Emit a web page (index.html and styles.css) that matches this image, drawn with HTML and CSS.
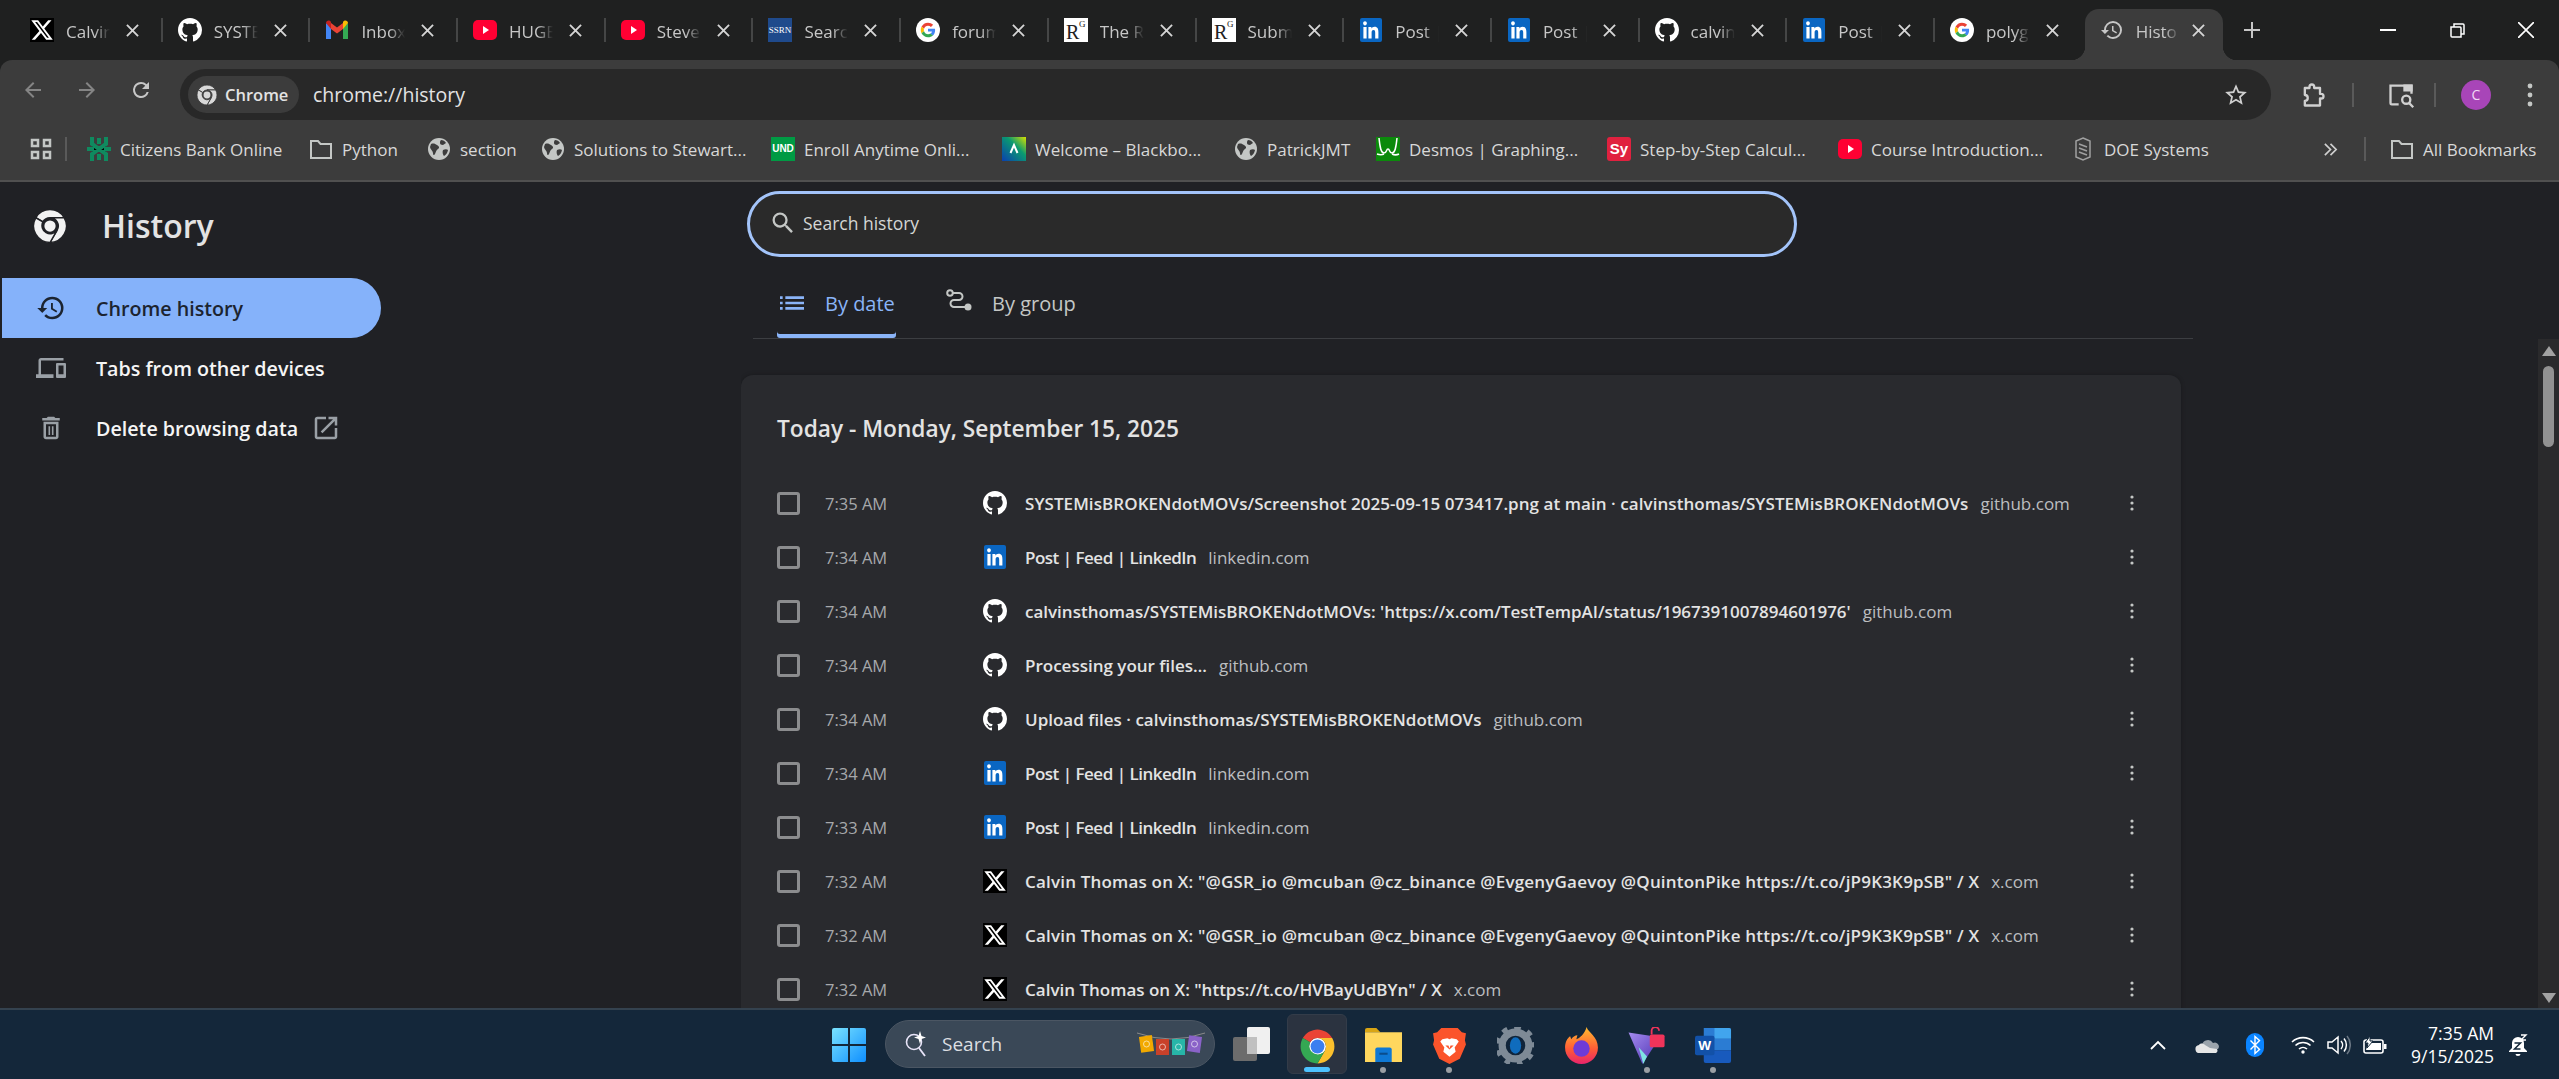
FILE: index.html
```html
<!DOCTYPE html>
<html lang="en">
  <head>
    <meta charset="UTF-8" />
    <title>History</title>
    <link rel="stylesheet" href="styles.css">
  </head>
  <body>
    <!-- icons used more than once -->
    <svg class="sprite" xmlns="http://www.w3.org/2000/svg">
      <symbol id="i-x" viewBox="0 0 24 24">
        <rect width="24" height="24" fill="#000"/>
        <path fill="#fff" d="M18.2 2.2h3.3l-7.2 8.3 8.5 11.2h-6.6l-5.2-6.8-6 6.8H1.7l7.7-8.8L1.3 2.2h6.8l4.7 6.2zm-1.1 17.6h1.8L7.1 4.1h-2z"/>
      </symbol>
      <symbol id="i-gh" viewBox="0 0 16 16">
        <path fill="#fff" d="M8 0C3.58 0 0 3.58 0 8c0 3.54 2.29 6.53 5.47 7.59.4.07.55-.17.55-.38 0-.19-.01-.82-.01-1.49-2.01.37-2.53-.49-2.69-.94-.09-.23-.48-.94-.82-1.13-.28-.15-.68-.52-.01-.53.63-.01 1.08.58 1.23.82.72 1.21 1.87.87 2.33.66.07-.52.28-.87.51-1.07-1.78-.2-3.64-.89-3.64-3.95 0-.87.31-1.59.82-2.15-.08-.2-.36-1.02.08-2.12 0 0 .67-.21 2.2.82.64-.18 1.32-.27 2-.27.68 0 1.36.09 2 .27 1.53-1.04 2.2-.82 2.2-.82.44 1.1.16 1.92.08 2.12.51.56.82 1.27.82 2.15 0 3.07-1.87 3.75-3.65 3.95.29.25.54.73.54 1.48 0 1.07-.01 1.93-.01 2.2 0 .21.15.46.55.38A8.013 8.013 0 0016 8c0-4.42-3.58-8-8-8z"/>
      </symbol>
      <symbol id="i-in" viewBox="0 0 24 24">
        <rect x="1" width="22" height="24" rx="2" fill="#0a66c2"/>
        <path fill="#fff" d="M19.4 20.5h-3.2v-5.6c0-1.3 0-3-1.7-3s-1.9 1.4-1.9 2.9v5.7H9.4V9h3v1.6c.5-.9 1.5-1.9 3.1-1.9 3.3 0 3.9 2.4 3.9 5.5zM6 7.4c-1 0-1.9-.9-1.9-2.1S5 3.3 6 3.3s1.9.9 1.9 2S7 7.4 6 7.4zm1.6 13.1H4.4V9h3.2z"/>
      </symbol>
      <symbol id="i-yt" viewBox="0 0 24 24">
        <rect y="2" width="24" height="20" rx="5" fill="#ff0033"/>
        <path fill="#fff" d="M10 8l6 4-6 4z"/>
      </symbol>
      <symbol id="i-google" viewBox="0 0 48 48">
        <circle cx="24" cy="24" r="24" fill="#fff"/>
        <path fill="#ea4335" d="M24 15.5c2.3 0 4.3.8 5.9 2.3l4.4-4.4C31.6 11 28.1 9.5 24 9.5c-5.7 0-10.6 3.3-13 8l5.1 4c1.2-3.5 4.4-6 7.9-6z"/>
        <path fill="#4285f4" d="M38.2 24.3c0-1-.1-2-.3-2.9H24v5.5h8c-.3 1.8-1.4 3.4-3 4.4l4.9 3.8c2.8-2.6 4.3-6.4 4.3-10.8z"/>
        <path fill="#fbbc05" d="M16.1 26.6c-.3-.9-.5-1.7-.5-2.6s.2-1.8.5-2.6l-5.1-4c-1 2-1.5 4.2-1.5 6.6s.5 4.6 1.5 6.6z"/>
        <path fill="#34a853" d="M24 38.5c3.9 0 7.2-1.3 9.9-3.5L29 31.2c-1.4.9-3 1.5-5 1.5-3.5 0-6.7-2.5-7.9-6.1l-5.1 4c2.4 4.7 7.3 7.9 13 7.9z"/>
      </symbol>
      <symbol id="i-chrome" viewBox="0 0 48 48">
        <circle cx="24" cy="24" r="11" fill="#fff"/>
        <path fill="#ea4335" d="M5 13A22 22 0 0 1 43 13H24A11 11 0 0 0 14.5 18.5z"/>
        <path fill="#fbc02d" d="M43 13A22 22 0 0 1 24 46L33.5 29.5A11 11 0 0 0 24 13z"/>
        <path fill="#34a853" d="M24 46A22 22 0 0 1 5 13L14.5 18.5A11 11 0 0 0 33.5 29.5z"/>
        <circle cx="24" cy="24" r="9" fill="#3b7ff0"/>
      </symbol>
      <symbol id="i-chrome-mono" viewBox="0 0 48 48">
        <g fill="currentColor" stroke="var(--gap)" stroke-width="2">
          <path d="M5 13A22 22 0 0 1 43 13H24A11 11 0 0 0 14.5 18.5z"/>
          <path d="M43 13A22 22 0 0 1 24 46L33.5 29.5A11 11 0 0 0 24 13z"/>
          <path d="M24 46A22 22 0 0 1 5 13L14.5 18.5A11 11 0 0 0 33.5 29.5z"/>
        </g>
        <circle cx="24" cy="24" r="7.5" fill="currentColor"/>
      </symbol>
      <symbol id="i-globe" viewBox="0 0 24 24">
        <circle cx="12" cy="12" r="11" fill="#c4c7c5"/>
        <path fill="#3c3c3c" d="M4 7c3-1 4 0 6 1s3 3 1 4-2 3-3 5-2 1-2-1-3-4-3-6zM14 3c2 0 4 1 5 3l-3 2c-2 0-3-1-3-2s0-2 1-3zM16 13c2-1 4-1 5 0-.5 3-2 5-4 6-1-1-2-4-1-6z"/>
      </symbol>
      <symbol id="i-folder" viewBox="0 0 24 24">
        <path fill="none" stroke="#c4c7c5" stroke-width="2" d="M2 4h7l2.5 3H22v14H2z"/>
      </symbol>
      <symbol id="i-history" viewBox="0 0 24 24">
        <path fill="currentColor" d="M13 3a9 9 0 0 0-9 9H1l3.89 3.89.07.14L9 12H6c0-3.87 3.13-7 7-7s7 3.13 7 7-3.13 7-7 7c-1.93 0-3.68-.79-4.94-2.06l-1.42 1.42A8.954 8.954 0 0 0 13 21a9 9 0 0 0 0-18zm-1 5v5l4.28 2.54.72-1.21-3.5-2.08V8H12z"/>
      </symbol>
      <symbol id="i-close" viewBox="0 0 14 14">
        <path fill="none" stroke="currentColor" stroke-width="2" d="M1 1l12 12M13 1L1 13"/>
      </symbol>
      <symbol id="i-dots" viewBox="0 0 4 16">
        <circle cx="2" cy="2" r="1.6" fill="#c4c7c5"/>
        <circle cx="2" cy="8" r="1.6" fill="#c4c7c5"/>
        <circle cx="2" cy="14" r="1.6" fill="#c4c7c5"/>
      </symbol>
    </svg>

    <div class="tabstrip">
      <div class="tab"><svg class="fav"><use href="#i-x"/></svg><span class="tab-title">Calvin</span><svg class="tab-close"><use href="#i-close"/></svg></div>
      <div class="tab"><svg class="fav"><use href="#i-gh"/></svg><span class="tab-title">SYSTE</span><svg class="tab-close"><use href="#i-close"/></svg></div>
      <div class="tab">
        <svg class="fav" viewBox="0 0 24 24"><path fill="#4285f4" d="M1 21V5l5 3.5V21z"/><path fill="#34a853" d="M23 21V5l-5 3.5V21z"/><path fill="#ea4335" d="M6 11V5l6 4.5L18 5v6l-6 4.5z"/><path fill="#c5221f" d="M1 5c0-2 2.5-3 4-2l1 .8V11z"/><path fill="#fbbc05" d="M23 5c0-2-2.5-3-4-2l-1 .8V11z"/></svg>
        <span class="tab-title">Inbox</span><svg class="tab-close"><use href="#i-close"/></svg>
      </div>
      <div class="tab"><svg class="fav"><use href="#i-yt"/></svg><span class="tab-title">HUGE</span><svg class="tab-close"><use href="#i-close"/></svg></div>
      <div class="tab"><svg class="fav"><use href="#i-yt"/></svg><span class="tab-title">Steve</span><svg class="tab-close"><use href="#i-close"/></svg></div>
      <div class="tab">
        <svg class="fav" viewBox="0 0 24 24"><rect width="24" height="24" fill="#1f4a8c"/><text class="ssrn-mark" x="12" y="15">SSRN</text></svg>
        <span class="tab-title">Searc</span><svg class="tab-close"><use href="#i-close"/></svg>
      </div>
      <div class="tab"><svg class="fav"><use href="#i-google"/></svg><span class="tab-title">forum</span><svg class="tab-close"><use href="#i-close"/></svg></div>
      <div class="tab">
        <svg class="fav" viewBox="0 0 24 24"><rect width="24" height="24" fill="#fff"/><text class="rg-big" x="2" y="21">R</text><text class="rg-small" x="15" y="9">G</text></svg>
        <span class="tab-title">The R</span><svg class="tab-close"><use href="#i-close"/></svg>
      </div>
      <div class="tab">
        <svg class="fav" viewBox="0 0 24 24"><rect width="24" height="24" fill="#fff"/><text class="rg-big" x="2" y="21">R</text><text class="rg-small" x="15" y="9">G</text></svg>
        <span class="tab-title">Subm</span><svg class="tab-close"><use href="#i-close"/></svg>
      </div>
      <div class="tab"><svg class="fav"><use href="#i-in"/></svg><span class="tab-title">Post |</span><svg class="tab-close"><use href="#i-close"/></svg></div>
      <div class="tab"><svg class="fav"><use href="#i-in"/></svg><span class="tab-title">Post |</span><svg class="tab-close"><use href="#i-close"/></svg></div>
      <div class="tab"><svg class="fav"><use href="#i-gh"/></svg><span class="tab-title">calvin</span><svg class="tab-close"><use href="#i-close"/></svg></div>
      <div class="tab"><svg class="fav"><use href="#i-in"/></svg><span class="tab-title">Post |</span><svg class="tab-close"><use href="#i-close"/></svg></div>
      <div class="tab"><svg class="fav"><use href="#i-google"/></svg><span class="tab-title">polyg</span><svg class="tab-close"><use href="#i-close"/></svg></div>
      <div class="tab tab-active"><svg class="fav"><use href="#i-history"/></svg><span class="tab-title">Histo</span><svg class="tab-close"><use href="#i-close"/></svg></div>

      <svg class="new-tab" viewBox="0 0 16 16"><path fill="none" stroke="#c7c7c7" stroke-width="2" d="M8 0v16M0 8h16"/></svg>

      <div class="window-controls">
        <svg class="win-btn" viewBox="0 0 16 16"><path stroke="#fff" stroke-width="2" d="M0 8h16"/></svg>
        <svg class="win-btn" viewBox="0 0 16 16"><path fill="none" stroke="#fff" stroke-width="1.5" d="M2 5h9a1 1 0 0 1 1 1v9H3a1 1 0 0 1-1-1zM5 5V2h9a1 1 0 0 1 1 1v9h-3"/></svg>
        <svg class="win-btn" viewBox="0 0 16 16"><path stroke="#fff" stroke-width="1.7" d="M0 0l16 16M16 0L0 16"/></svg>
      </div>
    </div>

    <div class="toolbar">
      <svg class="tool-icon first" viewBox="0 0 24 24"><path fill="#858585" d="M20 11H7.8l5.6-5.6L12 4l-8 8 8 8 1.4-1.4L7.8 13H20z"/></svg>
      <svg class="tool-icon" viewBox="0 0 24 24"><path fill="#858585" d="M4 11h12.2l-5.6-5.6L12 4l8 8-8 8-1.4-1.4 5.6-5.6H4z"/></svg>
      <svg class="tool-icon" viewBox="0 0 24 24"><path fill="#c7c7c7" d="M17.65 6.35A7.96 7.96 0 0 0 12 4a8 8 0 1 0 7.73 10h-2.08A6 6 0 1 1 12 6c1.66 0 3.14.69 4.22 1.78L13 11h7V4z"/></svg>
      <div class="omnibox">
        <div class="chip">
          <svg class="chip-icon"><use href="#i-chrome-mono"/></svg>
          <span>Chrome</span>
        </div>
        <span class="url">chrome://history</span>
        <svg class="star" viewBox="0 0 24 24"><path fill="#d0d0d0" d="M22 9.24l-7.19-.62L12 2 9.19 8.63 2 9.24l5.46 4.73L5.82 21 12 17.27 18.18 21l-1.63-7.03L22 9.24zM12 15.4l-3.76 2.27 1-4.28-3.32-2.88 4.38-.38L12 6.1l1.71 4.04 4.38.38-3.32 2.88 1 4.28L12 15.4z"/></svg>
      </div>
      <svg class="tool-btn ext" viewBox="0 0 24 24"><path fill="none" stroke="#d0d0d0" stroke-width="2" stroke-linejoin="round" d="M5 6h4V5a2 2 0 0 1 4 0v1h5v5h1a2 2 0 0 1 0 4h-1v6H5v-4a2.5 2.5 0 0 0 0-5z"/></svg>
      <span class="tool-sep"></span>
      <svg class="tool-btn panel" viewBox="0 0 24 24"><path fill="none" stroke="#d0d0d0" stroke-width="2" d="M10 20H4a1 1 0 0 1-1-1V4h18v7"/><path fill="#d0d0d0" d="M14 3h8v6h-8z"/><circle cx="16.5" cy="16" r="3.5" fill="none" stroke="#d0d0d0" stroke-width="2"/><path stroke="#d0d0d0" stroke-width="2" d="M19 19l3.5 3.5"/></svg>
      <span class="tool-sep"></span>
      <span class="avatar">C</span>
      <svg class="tool-menu"><use href="#i-dots"/></svg>
    </div>

    <div class="bookmarks">
      <svg class="bm-apps" viewBox="0 0 22 22"><path fill="none" stroke="#c4c7c5" stroke-width="2.5" d="M2 2h6v6H2zM14 2h6v6h-6zM2 14h6v6H2zM14 14h6v6h-6z"/></svg>
      <span class="bm-sep"></span>
      <div class="bm">
        <svg class="fav" viewBox="0 0 24 24"><g stroke="#0f8a5f" stroke-width="4"><path d="M5 0v7l7 5-7 5v7M19 0v7l-7 5 7 5v7M0 12h7M17 12h7M12 1v6M12 17v6"/></g></svg>
        <span>Citizens Bank Online</span>
      </div>
      <div class="bm"><svg class="fav"><use href="#i-folder"/></svg><span>Python</span></div>
      <div class="bm"><svg class="fav"><use href="#i-globe"/></svg><span>section</span></div>
      <div class="bm"><svg class="fav"><use href="#i-globe"/></svg><span>Solutions to Stewart...</span></div>
      <div class="bm">
        <svg class="fav" viewBox="0 0 24 24"><rect width="24" height="24" fill="#009a44"/><text class="und-mark" x="12" y="15">UND</text></svg>
        <span>Enroll Anytime Onli...</span>
      </div>
      <div class="bm">
        <svg class="fav" viewBox="0 0 24 24"><defs><linearGradient id="bb-grad" x1="0" y1="1" x2="1" y2="0"><stop offset="0" stop-color="#0a3fb0"/><stop offset=".6" stop-color="#0a9a70"/><stop offset="1" stop-color="#d8e000"/></linearGradient></defs><rect width="24" height="24" fill="url(#bb-grad)"/><path fill="none" stroke="#fff" stroke-width="2" d="M8.5 16L12 8l3.5 8"/></svg>
        <span>Welcome – Blackbo...</span>
      </div>
      <div class="bm"><svg class="fav"><use href="#i-globe"/></svg><span>PatrickJMT</span></div>
      <div class="bm">
        <svg class="fav" viewBox="0 0 24 24"><rect width="24" height="24" fill="#0b8a0b"/><path fill="none" stroke="#fff" stroke-width="1.5" d="M3 1c1 10 2 15 5 15s2-4 4-4 1 4 4 4 4-5 5-15M1 17c3 1 5 1 7 0M16 17c2 1 5 1 7 0"/></svg>
        <span>Desmos | Graphing...</span>
      </div>
      <div class="bm">
        <svg class="fav" viewBox="0 0 24 24"><rect width="24" height="24" rx="3" fill="#e0213f"/><text class="sy-mark" x="12" y="17">Sy</text></svg>
        <span>Step-by-Step Calcul...</span>
      </div>
      <div class="bm"><svg class="fav"><use href="#i-yt"/></svg><span>Course Introduction...</span></div>
      <div class="bm">
        <svg class="fav" viewBox="0 0 24 24"><path fill="none" stroke="#a0a0a0" stroke-width="1.5" d="M12 1l7 3v16l-7 3-7-3V4z"/><path stroke="#a0a0a0" stroke-width="1.5" d="M8 7l8 3M8 11l8 3M8 15l8 3"/></svg>
        <span>DOE Systems</span>
      </div>
      <svg class="bm-more" viewBox="0 0 16 16"><path fill="none" stroke="#d0d0d0" stroke-width="1.8" d="M2 2l6 6-6 6M8 2l6 6-6 6"/></svg>
      <span class="bm-sep"></span>
      <div class="bm"><svg class="fav"><use href="#i-folder"/></svg><span>All Bookmarks</span></div>
    </div>

    <main class="main">
      <aside class="sidebar">
        <div class="side-head">
          <svg class="side-logo"><use href="#i-chrome-mono"/></svg>
          <span>History</span>
        </div>
        <nav>
          <a class="nav-item nav-active">
            <svg class="nav-icon"><use href="#i-history"/></svg>
            <span>Chrome history</span>
          </a>
          <a class="nav-item">
            <svg class="nav-icon" viewBox="0 0 24 24"><path fill="#9aa0a6" d="M4 6h18V4H4c-1.1 0-2 .9-2 2v11H0v3h14v-3H4V6zm19 2h-6c-.55 0-1 .45-1 1v10c0 .55.45 1 1 1h6c.55 0 1-.45 1-1V9c0-.55-.45-1-1-1zm-1 9h-4v-7h4v7z"/></svg>
            <span>Tabs from other devices</span>
          </a>
          <a class="nav-item">
            <svg class="nav-icon" viewBox="0 0 24 24"><path fill="#9aa0a6" d="M6 19c0 1.1.9 2 2 2h8c1.1 0 2-.9 2-2V7H6v12zM8 9h8v10H8V9zm7.5-5l-1-1h-5l-1 1H5v2h14V4h-3.5zM10 10.5h1.3v7H10zM12.7 10.5H14v7h-1.3z"/></svg>
            <span>Delete browsing data</span>
            <svg class="nav-ext" viewBox="0 0 24 24"><path fill="#9aa0a6" d="M19 19H5V5h7V3H5c-1.11 0-2 .9-2 2v14c0 1.1.89 2 2 2h14c1.1 0 2-.9 2-2v-7h-2v7zM14 3v2h3.59l-9.83 9.83 1.41 1.41L19 6.41V10h2V3h-7z"/></svg>
          </a>
        </nav>
      </aside>

      <section class="content">
        <div class="search">
          <svg class="search-icon" viewBox="0 0 24 24"><path fill="#c4c7c5" d="M15.5 14h-.79l-.28-.27A6.471 6.471 0 0 0 16 9.5 6.5 6.5 0 1 0 9.5 16c1.61 0 3.09-.59 4.23-1.57l.27.28v.79l5 4.99L20.49 19l-4.99-5zm-6 0C7.01 14 5 11.99 5 9.5S7.01 5 9.5 5 14 7.01 14 9.5 11.99 14 9.5 14z"/></svg>
          <span>Search history</span>
        </div>

        <div class="view-tabs">
          <div class="view-tab view-tab-on">
            <svg class="view-icon" viewBox="3 7 18 10"><path fill="#8ab4f8" d="M3 13h2v-2H3v2zm0 4h2v-2H3v2zm0-8h2V7H3v2zm4 4h14v-2H7v2zm0 4h14v-2H7v2zM7 7v2h14V7H7z"/></svg>
            <span>By date</span>
          </div>
          <div class="view-tab">
            <svg class="group-icon" viewBox="0 0 26 22"><circle cx="4" cy="4" r="2.8" fill="none" stroke="#c4c7c5" stroke-width="2"/><circle cx="22" cy="18" r="3.5" fill="#c4c7c5"/><path fill="none" stroke="#c4c7c5" stroke-width="2" d="M7 4h6a3.5 3.5 0 0 1 0 7H8a3.5 3.5 0 0 0 0 7h11"/></svg>
            <span>By group</span>
          </div>
        </div>

        <div class="card">
          <h2 class="card-title">Today - Monday, September 15, 2025</h2>

          <div class="row"><span class="check"></span><span class="time">7:35 AM</span><svg class="fav"><use href="#i-gh"/></svg><span class="title title-long">SYSTEMisBROKENdotMOVs/Screenshot 2025-09-15 073417.png at main · calvinsthomas/SYSTEMisBROKENdotMOVs</span><span class="domain">github.com</span><svg class="row-menu"><use href="#i-dots"/></svg></div>
          <div class="row"><span class="check"></span><span class="time">7:34 AM</span><svg class="fav"><use href="#i-in"/></svg><span class="title title-tight">Post | Feed | LinkedIn</span><span class="domain">linkedin.com</span><svg class="row-menu"><use href="#i-dots"/></svg></div>
          <div class="row"><span class="check"></span><span class="time">7:34 AM</span><svg class="fav"><use href="#i-gh"/></svg><span class="title">calvinsthomas/SYSTEMisBROKENdotMOVs: 'https://x.com/TestTempAI/status/1967391007894601976'</span><span class="domain">github.com</span><svg class="row-menu"><use href="#i-dots"/></svg></div>
          <div class="row"><span class="check"></span><span class="time">7:34 AM</span><svg class="fav"><use href="#i-gh"/></svg><span class="title">Processing your files…</span><span class="domain">github.com</span><svg class="row-menu"><use href="#i-dots"/></svg></div>
          <div class="row"><span class="check"></span><span class="time">7:34 AM</span><svg class="fav"><use href="#i-gh"/></svg><span class="title">Upload files · calvinsthomas/SYSTEMisBROKENdotMOVs</span><span class="domain">github.com</span><svg class="row-menu"><use href="#i-dots"/></svg></div>
          <div class="row"><span class="check"></span><span class="time">7:34 AM</span><svg class="fav"><use href="#i-in"/></svg><span class="title title-tight">Post | Feed | LinkedIn</span><span class="domain">linkedin.com</span><svg class="row-menu"><use href="#i-dots"/></svg></div>
          <div class="row"><span class="check"></span><span class="time">7:33 AM</span><svg class="fav"><use href="#i-in"/></svg><span class="title title-tight">Post | Feed | LinkedIn</span><span class="domain">linkedin.com</span><svg class="row-menu"><use href="#i-dots"/></svg></div>
          <div class="row"><span class="check"></span><span class="time">7:32 AM</span><svg class="fav"><use href="#i-x"/></svg><span class="title title-wide">Calvin Thomas on X: "@GSR_io @mcuban @cz_binance @EvgenyGaevoy @QuintonPike https://t.co/jP9K3K9pSB" / X</span><span class="domain">x.com</span><svg class="row-menu"><use href="#i-dots"/></svg></div>
          <div class="row"><span class="check"></span><span class="time">7:32 AM</span><svg class="fav"><use href="#i-x"/></svg><span class="title title-wide">Calvin Thomas on X: "@GSR_io @mcuban @cz_binance @EvgenyGaevoy @QuintonPike https://t.co/jP9K3K9pSB" / X</span><span class="domain">x.com</span><svg class="row-menu"><use href="#i-dots"/></svg></div>
          <div class="row"><span class="check"></span><span class="time">7:32 AM</span><svg class="fav"><use href="#i-x"/></svg><span class="title">Calvin Thomas on X: "https://t.co/HVBayUdBYn" / X</span><span class="domain">x.com</span><svg class="row-menu"><use href="#i-dots"/></svg></div>
        </div>
      </section>

      <div class="scrollbar">
        <span class="arrow-up"></span>
        <span class="thumb"></span>
        <span class="arrow-down"></span>
      </div>
    </main>

    <footer class="taskbar">
      <svg class="win-logo" viewBox="0 0 36 36"><defs><linearGradient id="win-grad" x1="0" y1="0" x2="1" y2="1"><stop offset="0" stop-color="#7ae3ff"/><stop offset="1" stop-color="#0f8fff"/></linearGradient></defs><path fill="url(#win-grad)" d="M1 3a2 2 0 0 1 2-2h14v16H1zM19 1h14a2 2 0 0 1 2 2v14H19zM1 19h16v16H3a2 2 0 0 1-2-2zM19 19h16v14a2 2 0 0 1-2 2H19z"/></svg>

      <div class="task-search">
        <svg class="task-search-icon" viewBox="0 0 24 26"><circle cx="10" cy="11" r="7.5" fill="none" stroke="#e8e4f8" stroke-width="1.6"/><path stroke="#e8e4f8" stroke-width="1.8" d="M15 17l6 8"/><path fill="#fff" d="M16 0l1.5 5L22 6.5 17.5 8 16 13l-1.5-5L10 6.5 14.5 5z"/></svg>
        <span>Search</span>
        <svg class="flags" viewBox="0 0 70 24">
          <path fill="none" stroke="#8a8a8a" d="M1 1q34 12 68 0"/>
          <rect x="4" y="4" width="13" height="16" fill="#f2a900" transform="rotate(-8 10 12)"/>
          <rect x="20" y="7" width="13" height="16" fill="#c8412a"/>
          <rect x="36" y="7" width="13" height="16" fill="#27b5a8"/>
          <rect x="52" y="4" width="13" height="16" fill="#8a63c8" transform="rotate(8 58 12)"/>
          <g fill="none" stroke="#fff" stroke-opacity=".6"><circle cx="10.5" cy="12" r="3"/><circle cx="26.5" cy="15" r="3"/><circle cx="42.5" cy="15" r="3"/><circle cx="58.5" cy="12" r="3"/></g>
        </svg>
      </div>

      <svg class="task-view" viewBox="0 0 37 34"><rect x="14" width="23" height="27" rx="2" fill="#f0f0f0"/><rect y="10" width="24" height="24" rx="2" fill="#6c6c6c"/><rect x="14" y="10" width="10" height="17" fill="#c0c0c0"/></svg>

      <div class="app app-on">
        <svg class="app-icon"><use href="#i-chrome"/></svg>
        <span class="app-line"></span>
      </div>
      <div class="app">
        <svg class="app-icon" viewBox="0 0 36 36"><path fill="#d9a514" d="M0 3a2 2 0 0 1 2-2h9l4 4H0z"/><path fill="#ffd75e" d="M0 5h36v29H0z"/><path fill="#0f78d4" d="M10 22a2 2 0 0 1 2-2h12a2 2 0 0 1 2 2v12H10z"/><path fill="#0a4d8c" d="M14 25h8v2h-8z"/></svg>
        <span class="app-dot"></span>
      </div>
      <div class="app">
        <svg class="app-icon" viewBox="0 0 36 36"><path fill="#fb542b" d="M10 1h16l4 4 4 1-1 7 1 4-6 14-10 5-10-5-6-14 1-4-1-7 4-1z"/><path fill="#fff" d="M11 12l5-1 2 1 2-1 5 1 2 2-4 6 1 4-6 5-6-5 1-4-4-6z"/><path fill="#fb542b" d="M14 18h3l1 3 1-3h3l-4 4z"/></svg>
        <span class="app-dot"></span>
      </div>
      <div class="app">
        <svg class="app-icon" viewBox="0 0 36 36"><circle cx="18" cy="18" r="13" fill="none" stroke="#7e8a96" stroke-width="7"/><path stroke="#7e8a96" stroke-width="7" stroke-dasharray="5 6.3" fill="none" d="M18 1.5a16.5 16.5 0 1 1 0 33 16.5 16.5 0 1 1 0-33"/><circle cx="18" cy="18" r="9" fill="#10243a"/><ellipse cx="18" cy="18" rx="5.5" ry="8" fill="#0f6cbd"/></svg>
      </div>
      <div class="app">
        <svg class="app-icon" viewBox="0 0 36 36"><defs><linearGradient id="ff-grad" x1="0" y1="0" x2="0" y2="1"><stop offset="0" stop-color="#ffbd2e"/><stop offset=".6" stop-color="#ff5a36"/><stop offset="1" stop-color="#e8246c"/></linearGradient></defs><path fill="url(#ff-grad)" d="M23 0c1 5 11 9 11 20a16 16 0 0 1-32 0c0-5 2-9 5-11l1 3c1-2 4-4 6-4l-1 4c3-1 8-5 10-12z"/><circle cx="18" cy="21" r="8" fill="#6e3bd6"/></svg>
      </div>
      <div class="app">
        <svg class="app-icon proton" viewBox="0 0 42 40"><defs><linearGradient id="vpn-grad" x1="0" y1="0" x2="1" y2="1"><stop offset="0" stop-color="#a68cf0"/><stop offset="1" stop-color="#4a2fb0"/></linearGradient></defs><path fill="url(#vpn-grad)" d="M1 6l34 5-19 29z"/><path fill="#7fe3e3" d="M12 22l5 18 4-8z"/><path fill="none" stroke="#f0345a" stroke-width="2" d="M26 8V4a4 4 0 0 1 8 0"/><rect x="24" y="8" width="16" height="14" rx="2" fill="#f0345a"/></svg>
        <span class="app-dot"></span>
      </div>
      <div class="app">
        <svg class="app-icon" viewBox="0 0 38 36"><path fill="#2b7cd3" d="M9 0h26a2 2 0 0 1 2 2v9H9z"/><path fill="#41a5ee" d="M20 0h15a2 2 0 0 1 2 2v9H20z"/><path fill="#2b7cd3" d="M9 11h28v12H9z"/><path fill="#185abd" d="M9 23h28v11a2 2 0 0 1-2 2H11a2 2 0 0 1-2-2z"/><rect y="8" width="20" height="20" rx="2" fill="#1251a8"/><text class="word-mark" x="10" y="23">W</text></svg>
        <span class="app-dot"></span>
      </div>

      <div class="tray">
        <svg class="tray-chevron" viewBox="0 0 16 10"><path fill="none" stroke="#fff" stroke-width="1.8" d="M1 9l7-7 7 7"/></svg>
        <svg class="tray-cloud" viewBox="0 0 24 16"><path fill="#9aa3ab" d="M7 8a6 6 0 0 1 11-2 4 4 0 0 1 5 6H8z"/><path fill="#e6e6e6" d="M5 16a4 4 0 0 1-1-8c1-2 4-2 6 0l5 3 7 1a3 3 0 0 1-1 4z"/></svg>
        <svg class="tray-bt" viewBox="0 0 18 24"><rect width="18" height="24" rx="9" fill="#0a84ff"/><path fill="none" stroke="#fff" stroke-width="1.4" d="M4.5 7.5l9 9L9 20.5v-17l4.5 4-9 9"/></svg>
        <svg class="tray-wifi" viewBox="0 0 24 18"><g fill="none" stroke="#fff" stroke-width="1.6"><path d="M1 6a16 16 0 0 1 22 0"/><path d="M4.5 9.5a11 11 0 0 1 15 0"/><path d="M8 13a6 6 0 0 1 8 0"/></g><circle cx="12" cy="16" r="1.7" fill="#fff"/></svg>
        <svg class="tray-sound" viewBox="0 0 24 20"><path fill="none" stroke="#fff" stroke-width="1.5" d="M1 7h4l6-5v16l-6-5H1zM14 6a6 6 0 0 1 0 8M17 3.5a10 10 0 0 1 0 13"/><path fill="none" stroke="#6a7683" stroke-width="1.5" d="M20 1a14 14 0 0 1 0 18"/></svg>
        <svg class="tray-battery" viewBox="0 0 24 18"><rect x="1" y="4" width="19" height="13" rx="2" fill="none" stroke="#fff" stroke-width="1.6"/><path fill="#fff" d="M21 8h2.5v5H21zM5 7h13v7H3z"/><path fill="#fff" stroke="#13273a" d="M7 0L2 7h3l-1 5 6-7H7z"/></svg>
        <div class="clock">
          <span>7:35 AM</span>
          <span>9/15/2025</span>
        </div>
        <svg class="tray-bell" viewBox="0 0 20 22"><path fill="#fff" d="M10 3a6 6 0 0 0-6 6v5l-3 3v1h18v-1l-3-3V9a6 6 0 0 0-6-6zM7.5 20h5a2.5 2 0 0 1-5 0z"/><path fill="none" stroke="#13273a" stroke-width="1.5" d="M6.5 9h6l-6 6h6"/><path fill="none" stroke="#fff" stroke-width="1.4" d="M13 1h5l-5 5h5"/></svg>
      </div>
    </footer>
  </body>
</html>
```

FILE: styles.css
```css
:root {
  --page-bg: #202125;
  --card-bg: #292a2e;
  --toolbar-bg: #3c3c3c;
  --strip-bg: #1f2020;
  --blue: #8ab4f8;
  --text: #e3e3e3;
  --muted: #c4c7c5;
  --ui-font: "Open Sans", "Noto Sans", sans-serif;
}

* {
  box-sizing: border-box;
}

html,
body {
  margin: 0;
  height: 100%;
  overflow: hidden;
}

body {
  display: flex;
  flex-direction: column;
  height: 1079px;
  background-color: var(--strip-bg);
  font-family: var(--ui-font);
  color: var(--text);
}

.sprite {
  position: absolute;
  width: 0;
  height: 0;
}

.fav {
  flex: none;
  width: 24px;
  height: 24px;
}

/* tab strip */
.tabstrip {
  display: flex;
  align-items: flex-end;
  flex: none;
  height: 60px;
  padding-left: 15px;
}

.tab {
  display: flex;
  align-items: center;
  flex: none;
  position: relative;
  width: 147.7px;
  height: 51px;
  padding: 0 0 9px 15px;
}

.tab::after {
  content: "";
  position: absolute;
  right: 0;
  top: 9px;
  width: 2px;
  height: 24px;
  background-color: #454646;
}

.tab:has(+ .tab-active)::after {
  display: none;
}

.tab-title {
  width: 44px;
  margin-left: 12px;
  padding-top: 3px;
  overflow: hidden;
  white-space: nowrap;
  font-size: 17px;
  color: #c7c7c7;
  -webkit-mask-image: linear-gradient(to right, #000 65%, transparent);
  mask-image: linear-gradient(to right, #000 65%, transparent);
}

.tab-close {
  flex: none;
  width: 13px;
  height: 13px;
  margin-left: 16px;
  color: #d5d5d5;
}

.tab-active {
  width: 138px;
  margin-left: 2px;
  border-radius: 14px 14px 0 0;
  background-color: var(--toolbar-bg);
}

/* the flared feet of the open tab */
.tab-active::before,
.tab-active::after {
  content: "";
  position: absolute;
  top: auto;
  bottom: 0;
  width: 14px;
  height: 14px;
}

.tab-active::before {
  left: -14px;
  background: radial-gradient(circle at 0 0, transparent 14px, var(--toolbar-bg) 14.5px);
}

.tab-active::after {
  right: -14px;
  background: radial-gradient(circle at 100% 0, transparent 14px, var(--toolbar-bg) 14.5px);
}

.tab-active .fav {
  color: #c7c7c7;
}

.tab-active .tab-close {
  margin-left: 12px;
}

.new-tab {
  flex: none;
  width: 16px;
  height: 16px;
  margin: 0 0 22px 21px;
}

.window-controls {
  display: flex;
  align-items: center;
  gap: 53px;
  height: 60px;
  margin-left: auto;
  padding-right: 25px;
  align-self: flex-start;
}

.win-btn {
  width: 16px;
  height: 16px;
}

/* toolbar */
.toolbar {
  display: flex;
  align-items: center;
  flex: none;
  height: 60px;
  border-radius: 12px 12px 0 0;
  background-color: var(--toolbar-bg);
}

.tool-icon {
  flex: none;
  width: 24px;
  height: 24px;
  margin-left: 30px;
}

.tool-icon.first {
  margin-left: 21px;
}

.omnibox {
  display: flex;
  align-items: center;
  flex: none;
  width: 2091px;
  height: 51px;
  margin: 9px 0 0 27px;
  padding: 0 22px 0 8px;
  border-radius: 26px;
  background-color: #282828;
}

.chip {
  display: flex;
  align-items: center;
  gap: 7px;
  width: 111px;
  height: 37px;
  padding-left: 8px;
  border-radius: 19px;
  background-color: #3c3c3c;
  font-size: 16.5px;
  font-weight: 600;
  color: #e3e3e3;
  --gap: #3c3c3c;
}

.chip-icon {
  flex: none;
  width: 22px;
  height: 22px;
  color: #d8d8d8;
}

.url {
  margin-left: 14px;
  font-size: 19.5px;
  color: #e3e3e3;
}

.star {
  width: 26px;
  height: 26px;
  margin-left: auto;
}

.tool-btn {
  flex: none;
  width: 28px;
  height: 28px;
  margin-top: 9px;
}

.ext {
  margin-left: 28px;
}

.tool-sep {
  flex: none;
  width: 2px;
  height: 24px;
  margin: 9px 33px 0 25px;
  background-color: #5a5a5a;
}

.panel + .tool-sep {
  margin: 9px 25px 0 19px;
}

.avatar {
  display: flex;
  align-items: center;
  justify-content: center;
  flex: none;
  width: 30px;
  height: 30px;
  margin-top: 9px;
  border-radius: 50%;
  background-color: #a845b8;
  font-size: 14px;
  color: #f0d8f4;
}

.tool-menu {
  flex: none;
  width: 6px;
  height: 24px;
  margin: 9px 0 0 36px;
}

/* bookmarks bar */
.bookmarks {
  display: grid;
  grid-template-columns: 35px 22px 222px 118px 114px 230px 231px 232px 142px 231px 231px 233px 249px 44px 26px auto;
  align-items: center;
  flex: none;
  height: 62px;
  padding: 0 0 2px 30px;
  border-bottom: 2px solid #505050;
  background-color: var(--toolbar-bg);
}

.bm-apps {
  width: 22px;
  height: 22px;
}

.bm-sep {
  width: 2px;
  height: 24px;
  background-color: #5a5a5a;
}

.bm {
  display: flex;
  align-items: center;
  gap: 9px;
  white-space: nowrap;
  font-size: 17px;
  color: #d8d8d8;
}

.bm-more {
  width: 15px;
  height: 15px;
  margin-left: 3px;
}

/* page */
.main {
  display: grid;
  grid-template-columns: 741px 1fr 21px;
  flex: 1;
  min-height: 0;
  background-color: var(--page-bg);
}

.sidebar {
  --gap: var(--page-bg);
}

.side-head {
  display: flex;
  align-items: center;
  height: 96px;
  padding: 0 0 9px 32px;
  font-size: 32px;
  font-weight: 600;
  color: #e3e3e3;
}

.side-logo {
  width: 36px;
  height: 36px;
  margin-right: 34px;
  color: #f2f2f2;
}

.nav-item {
  display: flex;
  align-items: center;
  width: 381px;
  height: 60px;
  padding-left: 36px;
  border-radius: 0 30px 30px 0;
  font-size: 19.7px;
  font-weight: 600;
  color: #f5f5f5;
}

.nav-icon {
  flex: none;
  width: 30px;
  height: 30px;
  margin-right: 30px;
}

.nav-active {
  margin-left: 2px;
  width: 379px;
  padding-left: 34px;
  background-color: #85b2fa;
  color: #1c2430;
}

.nav-ext {
  width: 30px;
  height: 30px;
  margin-left: 13px;
}

.content {
  display: flex;
  flex-direction: column;
  min-width: 0;
  overflow: hidden;
}

.search {
  display: flex;
  align-items: center;
  flex: none;
  width: 1050px;
  height: 66px;
  margin: 9px 0 0 6px;
  padding: 0 0 2px 19px;
  border: 3px solid #a3c4fa;
  border-radius: 33px;
  background-color: #2a2a2a;
  font-size: 17.5px;
  color: #d4d6d4;
}

.search-icon {
  width: 28px;
  height: 28px;
  margin-right: 6px;
}

.view-tabs {
  display: flex;
  flex: none;
  gap: 50px;
  width: 1440px;
  height: 82px;
  margin-left: 12px;
  padding-left: 24px;
  border-bottom: 1px solid #3c3e42;
}

.view-tab {
  display: flex;
  align-items: center;
  height: 81px;
  padding-top: 11px;
  font-size: 20px;
  font-weight: 500;
  color: var(--muted);
}

.view-tab-on {
  width: 119px;
  padding-left: 3px;
  color: var(--blue);
  box-shadow: inset 0 -4px 0 var(--blue);
  border-radius: 0 0 3px 3px;
}

.view-icon {
  width: 24px;
  height: 14px;
  margin-right: 21px;
}

.group-icon {
  width: 26px;
  height: 22px;
  margin: 0 20px 6px 0;
}

.card {
  flex: none;
  width: 1440px;
  margin-top: 36px;
  border-radius: 12px 12px 0 0;
  background-color: var(--card-bg);
  box-shadow: 0 0 4px rgba(0, 0, 0, 0.25);
}

.card-title {
  margin: 0;
  padding: 39px 0 32px 36px;
  font-size: 22.7px;
  line-height: 30px;
  font-weight: 600;
  color: #e3e3e3;
}

.row {
  display: flex;
  align-items: center;
  height: 54px;
  padding-left: 36px;
  white-space: nowrap;
  font-size: 17px;
}

.check {
  flex: none;
  width: 23px;
  height: 23px;
  margin-right: 25px;
  border: 3px solid #8b8c8e;
  border-radius: 3px;
}

.time {
  flex: none;
  width: 158px;
  font-size: 16.5px;
  color: #a6a8ab;
}

.title {
  margin-left: 18px;
  font-weight: 600;
  color: #e3e3e3;
}

.title-tight {
  letter-spacing: -0.5px;
}

.title-long {
  letter-spacing: 0.06px;
}

.title-wide {
  letter-spacing: 0.19px;
}

.domain {
  margin-left: 12px;
  color: #bcbec0;
}

.row-menu {
  flex: none;
  width: 4px;
  height: 16px;
  margin-left: auto;
  margin-right: 47px;
}

/* scrollbar column */
.scrollbar {
  display: flex;
  flex-direction: column;
  align-items: center;
  margin-top: 157px;
  padding: 7px 0 5px;
  background-color: #2a2a2c;
}

.arrow-up {
  width: 0;
  height: 0;
  border-left: 7px solid transparent;
  border-right: 7px solid transparent;
  border-bottom: 10px solid #a2a2a2;
}

.thumb {
  width: 11px;
  height: 81px;
  margin-top: 10px;
  border-radius: 6px;
  background-color: #929292;
}

.arrow-down {
  width: 0;
  height: 0;
  margin-top: auto;
  border-left: 7px solid transparent;
  border-right: 7px solid transparent;
  border-top: 10px solid #a2a2a2;
}

/* windows taskbar */
.taskbar {
  display: flex;
  align-items: flex-start;
  flex: none;
  height: 71px;
  padding-left: 831px;
  border-top: 2px solid #34424f;
  background-color: #14273a;
}

.win-logo {
  flex: none;
  width: 36px;
  height: 36px;
  margin-top: 17px;
}

.task-search {
  display: flex;
  align-items: center;
  flex: none;
  width: 330px;
  height: 48px;
  margin: 10px 0 0 18px;
  padding-left: 18px;
  border: 1px solid #4b5663;
  border-radius: 24px;
  background-color: #3a4857;
  font-size: 19px;
  color: #dcdfe2;
}

.task-search-icon {
  width: 24px;
  height: 26px;
  margin-right: 14px;
}

.flags {
  width: 70px;
  height: 24px;
  margin-left: auto;
  margin-right: 8px;
}

.task-view {
  flex: none;
  width: 37px;
  height: 34px;
  margin: 17px 14px 0 18px;
}

.app {
  display: flex;
  flex-direction: column;
  align-items: center;
  flex: none;
  width: 66px;
  height: 60px;
  margin-top: 4px;
  padding-top: 13px;
  border-radius: 6px;
}

.app-on {
  width: 60px;
  margin-left: 3px;
  margin-right: 3px;
  background-color: #2b3340;
  border: 1px solid #333c49;
}

.app-icon {
  flex: none;
  width: 37px;
  height: 37px;
}

.proton {
  width: 42px;
}

.app-dot {
  width: 6px;
  height: 6px;
  margin-top: 3px;
  border-radius: 50%;
  background-color: #9a9ea3;
}

.app-line {
  width: 26px;
  height: 5px;
  margin-top: 2px;
  border-radius: 3px;
  background-color: #4cc2ff;
}

.tray {
  display: flex;
  align-items: center;
  height: 69px;
  margin-left: auto;
  padding-right: 31px;
  color: #fff;
}

.tray-chevron {
  width: 16px;
  height: 10px;
  margin-right: 29px;
}

.tray-cloud {
  width: 24px;
  height: 16px;
  margin-right: 27px;
}

.tray-bt {
  width: 18px;
  height: 24px;
  margin-right: 27px;
}

.tray-wifi {
  width: 24px;
  height: 18px;
  margin-right: 12px;
}

.tray-sound {
  width: 24px;
  height: 20px;
  margin-right: 12px;
}

.tray-battery {
  width: 24px;
  height: 20px;
}

.clock {
  display: flex;
  flex-direction: column;
  align-items: flex-end;
  width: 107px;
  margin-right: 14px;
  font-size: 17.5px;
  line-height: 23px;
}

.tray-bell {
  width: 20px;
  height: 22px;
}

/* letter marks inside favicons */
.rg-big {
  font-family: "Liberation Serif", serif;
  font-size: 20px;
  fill: #222;
}

.rg-small {
  font-family: "Liberation Serif", serif;
  font-size: 9px;
  fill: #222;
}

.ssrn-mark {
  font-family: "Liberation Serif", serif;
  font-size: 9px;
  fill: #fff;
  text-anchor: middle;
}

.und-mark {
  font-family: "Liberation Sans", sans-serif;
  font-size: 10px;
  font-weight: 700;
  fill: #fff;
  text-anchor: middle;
}

.sy-mark {
  font-family: "Liberation Sans", sans-serif;
  font-size: 15px;
  font-weight: 700;
  fill: #fff;
  text-anchor: middle;
}

.word-mark {
  font-family: "Liberation Sans", sans-serif;
  font-size: 14px;
  font-weight: 700;
  fill: #fff;
  text-anchor: middle;
}
```
